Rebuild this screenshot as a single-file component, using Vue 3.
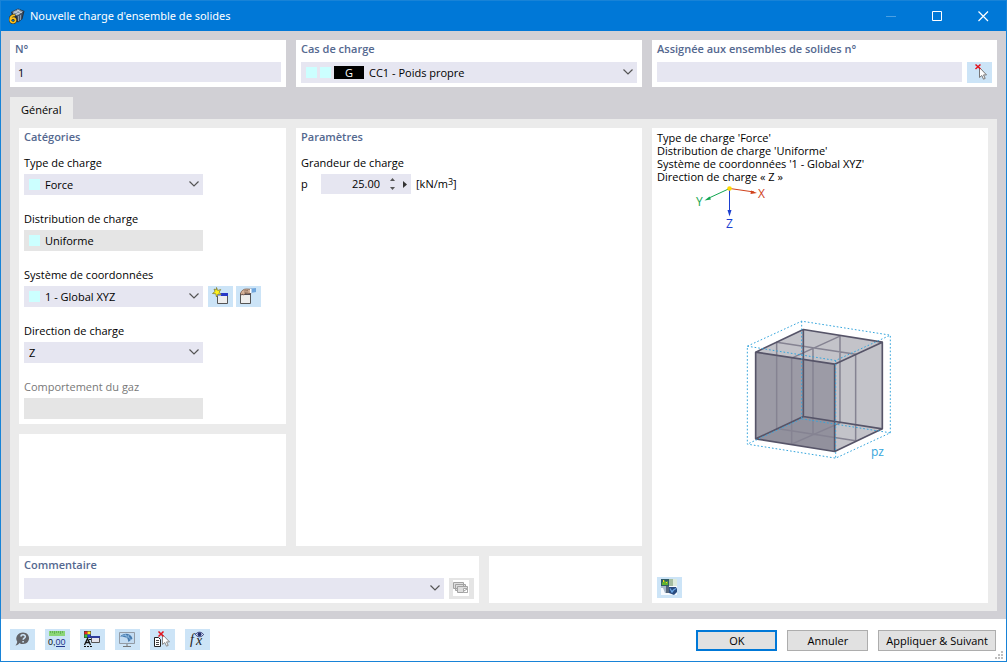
<script setup>
import { ref } from 'vue'

const number = ref('1')
const loadCase = ref('CC1 - Poids propre')
const assigned = ref('')
const loadType = ref('Force')
const distribution = ref('Uniforme')
const system = ref('1 - Global XYZ')
const direction = ref('Z')
const magnitude = ref('25.00')
const comment = ref('')

function step(delta) {
  magnitude.value = (Number(magnitude.value) + delta).toFixed(2)
}
</script>

<template>
  <div class="window">
    <header class="titlebar">
      <svg class="app-icon" viewBox="0 0 16 16" aria-hidden="true">
        <path d="M2 4 9 0.500 15.500 3 13.500 11 9 14.500 4 11z" fill="#24303f" />
        <path d="M3 4 9 1 14.500 3.500 8 8z" fill="#7c8ca0" />
        <path d="M4 5.500 10.500 2M6.500 7 13 4M5.500 3.500l5 3M8 2l5 3" stroke="#d3dae2" stroke-width=".8" />
        <path d="M8 8l6-4-1.500 7L9 14z" fill="#46566c" />
        <path d="M9.500 8v5M11.500 7v5" stroke="#9caabb" stroke-width=".8" />
        <path d="M6 7.500C3 7.200 1.200 9 1.200 11.500c0 4 5.300 4 5.300.8 0-2.500-3.600-3-5-.5" fill="none" stroke="#30302a" stroke-width="3" />
        <path d="M6 7.500C3 7.200 1.200 9 1.200 11.500c0 4 5.300 4 5.300.8 0-2.500-3.600-3-5-.5" fill="none" stroke="#fbc31e" stroke-width="1.700" />
      </svg>
      <h1>Nouvelle charge d'ensemble de solides</h1>
      <div class="window-buttons">
        <button type="button" aria-label="Réduire" disabled>
          <svg viewBox="0 0 11 11"><path d="M0 5.500h10" stroke="#4ba0e3" /></svg>
        </button>
        <button type="button" aria-label="Agrandir">
          <svg viewBox="0 0 11 11"><path d="M.5.5h9v9h-9z" fill="none" stroke="#fff" /></svg>
        </button>
        <button type="button" aria-label="Fermer">
          <svg viewBox="0 0 11 11"><path d="M.5.5l9.500 9.500M10 .5.500 10" stroke="#fff" stroke-width="1.200" /></svg>
        </button>
      </div>
    </header>

    <main class="body">
      <div class="top">
        <section class="panel">
          <h2><label for="number">N°</label></h2>
          <input id="number" v-model="number" class="box" type="text" />
        </section>
        <section class="panel">
          <h2><label for="case">Cas de charge</label></h2>
          <div class="combo">
            <i class="swatch"></i><i class="swatch near"></i><span class="badge">G</span>
            <select id="case" v-model="loadCase"><option>CC1 - Poids propre</option></select>
            <svg class="chevron" viewBox="0 0 10 6"><path d="M.5.5 5 5 9.500.5" /></svg>
          </div>
        </section>
        <section class="panel">
          <h2><label for="assigned">Assignée aux ensembles de solides n°</label></h2>
          <div class="line">
            <input id="assigned" v-model="assigned" class="box" type="text" />
            <button class="tool" type="button" aria-label="Sélectionner dans le graphique">
              <svg viewBox="0 0 25 21">
                <path d="M12.500 5.500v10l2.300-2 1.700 3.700 1.700-.8-1.700-3.500h3z" fill="#fff" stroke="#777" />
                <path d="M8.500 2.500l5 4.500M13.500 2.500l-5 4.500" stroke="#e3121d" stroke-width="1.500" />
              </svg>
            </button>
          </div>
        </section>
      </div>

      <nav class="tabs"><button type="button" class="tab">Général</button></nav>

      <div class="page">
        <div class="work">
          <div class="work-main">
            <div class="left">
              <section class="panel categories">
                <h2>Catégories</h2>
                <div class="field">
                  <label for="type">Type de charge</label>
                  <div class="combo">
                    <i class="swatch"></i>
                    <select id="type" v-model="loadType"><option>Force</option></select>
                    <svg class="chevron" viewBox="0 0 10 6"><path d="M.5.5 5 5 9.500.5" /></svg>
                  </div>
                </div>
                <div class="field">
                  <label for="dist">Distribution de charge</label>
                  <div class="combo off">
                    <i class="swatch"></i>
                    <select id="dist" v-model="distribution" disabled><option>Uniforme</option></select>
                  </div>
                </div>
                <div class="field">
                  <label for="system">Système de coordonnées</label>
                  <div class="line">
                    <div class="combo">
                      <i class="swatch"></i>
                      <select id="system" v-model="system"><option>1 - Global XYZ</option></select>
                      <svg class="chevron" viewBox="0 0 10 6"><path d="M.5.5 5 5 9.500.5" /></svg>
                    </div>
                    <div class="pair">
                      <button class="tool" type="button" aria-label="Nouveau système de coordonnées">
                        <svg viewBox="0 0 25 21">
                          <path d="M9.500 7.500h10v10h-10z" fill="#eee" stroke="#555" />
                          <path d="M9 7h11v3H9z" fill="#2638c8" /><path d="M9 7h4v3H9z" fill="#8aa0ee" />
                          <path d="M8.500 1.500l1.200 3 3-1-1.500 2.700 2 2.300-3.200-.5-1.500 3-.7-3.200-3.300-.3 2.500-2-1-2.500 2.200 1z" fill="#fff31c" stroke="#77722a" stroke-width=".7" />
                        </svg>
                      </button>
                      <button class="tool" type="button" aria-label="Modifier le système de coordonnées">
                        <svg viewBox="0 0 25 21">
                          <path d="M4.500 7.500h10v10h-10z" fill="#eee" stroke="#555" />
                          <path d="M4 7h11v2H4z" fill="#4c4c58" />
                          <path d="M4.500 7.500c1-3 3-4.500 6-4.500l5 .3v3.500l-3.500 1-3-.3-1.500 1.700-.8-1.200-1.200 1z" fill="#d7b39b" stroke="#785b49" stroke-width=".8" />
                          <path d="M8 5l4-.5M8.500 6.500l4-.5" stroke="#785b49" stroke-width=".7" />
                          <path d="M15 2.500l5-.5v4l-5 1z" fill="#6fa5dc" /><path d="M14 3h1.500v4H14z" fill="#fff" />
                        </svg>
                      </button>
                    </div>
                  </div>
                </div>
                <div class="field">
                  <label for="dir">Direction de charge</label>
                  <div class="combo">
                    <select id="dir" v-model="direction"><option>Z</option></select>
                    <svg class="chevron" viewBox="0 0 10 6"><path d="M.5.5 5 5 9.500.5" /></svg>
                  </div>
                </div>
                <div class="field muted">
                  <label for="gas">Comportement du gaz</label>
                  <div class="combo off"><select id="gas" disabled></select></div>
                </div>
              </section>
              <section class="panel grow"></section>
            </div>

            <section class="panel">
              <h2>Paramètres</h2>
              <div class="field wide">
                <span>Grandeur de charge</span>
                <div class="line">
                  <label class="symbol" for="magnitude">p</label>
                  <div class="spin">
                    <input id="magnitude" v-model="magnitude" type="text" />
                    <span class="steps">
                      <button type="button" aria-label="Augmenter" @click="step(1)"><svg viewBox="0 0 5 3"><path d="M0 3h5L2.500 0z" /></svg></button>
                      <button type="button" aria-label="Diminuer" @click="step(-1)"><svg viewBox="0 0 5 3"><path d="M0 0h5L2.500 3z" /></svg></button>
                    </span>
                    <button class="more" type="button" aria-label="Plus"><svg viewBox="0 0 4 7"><path d="M0 0v7l4-3.500z" /></svg></button>
                  </div>
                  <span class="unit">[kN/m<sup>3</sup>]</span>
                </div>
              </div>
            </section>
          </div>

          <div class="work-foot">
            <section class="panel">
              <h2><label for="comment">Commentaire</label></h2>
              <div class="line">
                <div class="combo">
                  <select id="comment" v-model="comment"></select>
                  <svg class="chevron" viewBox="0 0 10 6"><path d="M.5.5 5 5 9.500.5" /></svg>
                </div>
                <button class="tool dim" type="button" aria-label="Commentaires enregistrés" disabled>
                  <svg viewBox="0 0 25 21">
                    <path d="M4 2h16v16H4z" fill="#fff" />
                    <path d="M4.500 4.500h10v6h-10zM6.500 6.500h10v6h-10z" fill="#ddd" stroke="#a2a2a2" />
                    <path d="M8.500 8.500h10v6h-10z" fill="#ddd" stroke="#a2a2a2" />
                    <path d="M14.500 10.500h4v4h-4z" fill="#fff" stroke="#aaa" /><path d="M15 13l3-2" stroke="#999" />
                  </svg>
                </button>
              </div>
            </section>
            <section class="panel"></section>
          </div>
        </div>

        <section class="preview">
          <p>Type de charge 'Force'<br />Distribution de charge 'Uniforme'<br />Système de coordonnées '1 - Global XYZ'<br />Direction de charge « Z »</p>
          <svg class="scene" viewBox="652 183 336 394" role="img" aria-label="Aperçu de la charge sur un solide">
            <g fill="none" stroke-width="1">
              <path d="M730 188.500 754 192" stroke="#d0421b" /><path d="M729.500 188.500 709 198" stroke="#12a650" /><path d="M729.500 188.500V210" stroke="#1b3fd0" />
            </g>
            <path d="M757 193l-6.500 1 .5-3.500z" fill="#d0421b" />
            <path d="M704.500 200.500l5-4 1.500 3z" fill="#12a650" />
            <path d="M729.500 216.500l-2-6.500h4z" fill="#1b3fd0" />
            <circle cx="729.500" cy="188.500" r="2.300" fill="#ffd800" />
            <text x="758" y="198" fill="#d0421b">X</text>
            <text x="696" y="206" fill="#12a650">Y</text>
            <text x="726" y="228" fill="#1b3fd0">Z</text>
            <g transform="translate(734 309.500) scale(.3333)" fill="none" stroke-linejoin="round">
              <path d="M65 128 208 60 445 98V358L302 426 65 388z" fill="#c3c3c9" />
              <path d="M65 128 302 164V426L65 388z" fill="#9c9ba6" />
              <path d="M65 388 208 321 302 336V426z" fill="#92919d" />
              <g stroke="#858392" stroke-width="4.500">
                <path d="M128 98 365 134V394L128 357zM318 80 173 146V404L318 340zM237 116V375" />
              </g>
              <g stroke="#565468" stroke-width="5">
                <path d="M208 60V321L65 388M208 321 445 358" />
                <path d="M65 128 208 60 445 98V358L302 426 65 388zL302 164 445 98M302 164V426" />
              </g>
              <g stroke="#35a5dc" stroke-width="3" stroke-dasharray="5 6">
                <path d="M40 110 203 35 469 77V370L305 446 40 404zL305 153 469 77M305 153V446M203 35V328L40 404M203 328 469 370" />
              </g>
            </g>
            <text x="871" y="456" class="load">pz</text>
          </svg>
          <button class="tool" type="button" aria-label="Afficher l'image">
            <svg viewBox="0 0 25 21">
              <path d="M4 2h16v16H4z" fill="#f7fbff" />
              <path d="M4 2h8v7H4z" fill="#315d66" /><path d="M5 6l2-3 2 2 2-1v4H5z" fill="#62b32c" /><path d="M6 3h1v2H6zM9 5h1v1H9z" fill="#ffd21c" />
              <path d="M12 2h4v7h-4z" fill="#a5bda0" /><path d="M16 2h4v7h-4z" fill="#dceadb" />
              <path d="M4 9h8v2H4zM6 11h6v5H8z" fill="#a7b6c8" /><path d="M9 9h3v7H9z" fill="#56677c" />
              <path d="M12 10h7l1 2v3l-3 3-5-2z" fill="#284b80" />
              <path d="M13 11.500l2 3.500 1.500-2 2.500-1.500" fill="none" stroke="#6ba6e4" stroke-width="1.300" />
            </svg>
          </button>
        </section>
      </div>
    </main>

    <footer class="footer">
      <div class="tools">
        <button class="tool" type="button" aria-label="Aide">
          <svg viewBox="0 0 25 21">
            <path d="M13 3.500c8 0 8 11.500 0 11.500-1.500 0-2.500 0-3.500-1-1 1.500-2.500 2.500-4 2.500 1-1.200 1.800-2.500 1.700-4C4.500 8.500 8 3.500 13 3.500z" fill="#626469" />
            <path d="M10.800 7.500c.4-2.500 4.700-2.200 4.500.2-.1 1.500-2.100 1.400-2.100 3.100M13.100 12v1.500" fill="none" stroke="#cce4f7" stroke-width="1.600" />
          </svg>
        </button>
        <button class="tool" type="button" aria-label="Unités et décimales">
          <svg viewBox="0 0 25 21">
            <path d="M4 2h16v5H4z" fill="#8bd678" /><path d="M5.500 2v2M7.500 2v2M9.500 2v3M11.500 2v2M13.500 2v2M15.500 2v3M17.500 2v2" stroke="#55a445" stroke-width=".7" />
            <text x="3" y="16" class="digits">0,<tspan class="blue">00</tspan></text>
            <path d="M11 17.500h9" stroke="#23378c" />
          </svg>
        </button>
        <button class="tool" type="button" aria-label="Affichage">
          <svg viewBox="0 0 25 21">
            <path d="M4 2h7v7H4z" fill="#333" /><path d="M4.500 2.500h3v3h-3z" fill="#f12727" /><path d="M7.500 2.500h3v3h-3z" fill="#ffe621" /><path d="M4.500 5.500h3v3h-3z" fill="#35bd35" /><path d="M7.500 5.500h3v3h-3z" fill="#2540e8" />
            <path d="M4.500 16l3-6.500 3 6.500M5.500 13.500h4" fill="none" stroke="#111" stroke-width="1.300" /><path d="M4 17.500h8" stroke="#111" stroke-dasharray="2 1" /><path d="M9 10.500h3" stroke="#111" />
            <path d="M11.500 7.500h8v6h-8z" fill="#e4e4ed" stroke="#555" /><path d="M11 7h9v2h-9z" fill="#2c3c9d" />
          </svg>
        </button>
        <button class="tool" type="button" aria-label="Vue">
          <svg viewBox="0 0 25 21">
            <path d="M4.500 3.500h15v11h-15z" fill="#c3dcf2" stroke="#929ba5" /><path d="M12 15v3M8 17.500h8" stroke="#777" />
            <path d="M5 7.500C9 3 16 4 17.500 9.500l-4 3.500-1-3.500c-2-1.500-5-2-7.500-2z" fill="#457aae" /><path d="M7 7c4-1.500 7 0 8.500 4M10 5l2 4M14 5.500l-1 3.500" fill="none" stroke="#9cc5e8" stroke-width=".7" />
          </svg>
        </button>
        <button class="tool" type="button" aria-label="Désélectionner">
          <svg viewBox="0 0 25 21">
            <path d="M4.500 8.500h4l2 2v7h-6z" fill="#fff" stroke="#222" /><path d="M6 11.500h3M6 13.500h3M6 15.500h3" stroke="#444" />
            <path d="M12.500 5.500v10l2.300-2 1.700 3.700 1.700-.8-1.700-3.500h3z" fill="#fff" stroke="#888" /><path d="M8.500 2.500l5 5M13.500 2.500l-5 5" stroke="#e3121d" stroke-width="1.500" />
          </svg>
        </button>
        <button class="tool" type="button" aria-label="Formule">
          <svg viewBox="0 0 25 21">
            <text x="5" y="15" class="formula">f</text><text x="11" y="16" class="formula">x</text>
            <path d="M10.500 5.500c2-3 6-3 8 0-2 3-6 3-8 0z" fill="#dbe5ff" stroke="#25306b" /><circle cx="14.500" cy="5.300" r="1.900" fill="#25306b" />
          </svg>
        </button>
      </div>
      <div class="actions">
        <button class="action primary" type="button">OK</button>
        <button class="action" type="button">Annuler</button>
        <button class="action" type="button">Appliquer &amp; Suivant</button>
      </div>
      <svg class="grip" viewBox="0 0 8 8" aria-hidden="true"><path d="M6 0h2v2H6zM3 3h2v2H3zM6 3h2v2H6zM0 6h2v2H0zM3 6h2v2H3zM6 6h2v2H6z" fill="#bfbfbf" /></svg>
    </footer>
  </div>
</template>

<style>
body { margin: 0; }
</style>

<style scoped>
* { box-sizing: border-box; }
.window {
  display: flex; flex-direction: column; min-height: 100vh;
  border: 1px solid #1883d7; background: #d1d0d5; color: #000;
  font: 11px/16px "Open Sans", "Noto Sans", sans-serif;
}
h1, h2, p { margin: 0; font-size: inherit; }
button, input, select { margin: 0; border: 0; padding: 0; font: inherit; color: inherit; background: transparent; border-radius: 0; }
svg { display: block; }
.titlebar { display: flex; align-items: center; height: 30px; padding-left: 8px; background: #0078d7; color: #fff; }
.app-icon { width: 16px; height: 16px; margin-right: 5px; }
h1 { flex: 1; font: 400 11px/16px "Noto Sans", sans-serif; }
.window-buttons { display: flex; align-self: stretch; }
.window-buttons button { width: 46px; display: grid; place-items: center; }
.window-buttons svg { width: 11px; height: 11px; }
.body { flex: 1; display: flex; flex-direction: column; padding: 9px 9px 8px; }
.top { display: grid; grid-template-columns: 276fr 346fr 345fr; gap: 10px; }
.panel { min-width: 0; padding: 1px 5px 4px; background: #fff; }
h2 { margin-bottom: 5px; color: #54688f; font-weight: 600; }
.box { display: block; width: 100%; min-width: 0; height: 20px; padding: 0 3px; background: #e6e6f1; }
.line { display: flex; gap: 5px; }
.combo { position: relative; flex: 1; display: flex; align-items: center; height: 21px; padding-left: 5px; background: #e6e6f1; }
.combo select { flex: 1; min-width: 0; height: 21px; appearance: none; opacity: 1; }
.combo.off { background: #e5e5e5; }
.swatch { width: 11px; height: 11px; margin-right: 5px; background: #ccffff; }
.swatch:has(+ .swatch), .near { margin-right: 3px; }
.badge { width: 30px; height: 13px; margin-right: 5px; background: #000; color: #fff; line-height: 13px; text-align: center; }
.chevron { position: absolute; right: 4px; top: 7px; width: 10px; height: 6px; pointer-events: none; fill: none; stroke: #555; stroke-width: 1.200; }
.tool { flex: none; width: 25px; height: 21px; background: #cce4f7; }
.tool svg { width: 25px; height: 21px; }
.tool.dim { background: #e5e5e5; }
.tabs { display: flex; margin-top: 10px; }
.tab { height: 22px; padding: 4px 12px 0 11px; background: #ebebeb; }
.page { flex: 1; display: grid; grid-template-columns: 623fr 336fr; gap: 10px; padding: 9px 9px 8px; background: #ebebeb; }
.work { display: flex; flex-direction: column; gap: 10px; min-width: 0; }
.work-main { flex: 1; display: grid; grid-template-columns: 267fr 346fr; gap: 10px; }
.work-foot { display: grid; grid-template-columns: 460fr 153fr; gap: 10px; }
.left { display: flex; flex-direction: column; gap: 10px; min-width: 0; }
.grow { flex: 1; }
.categories { padding-bottom: 5px; }
.field { display: flex; flex-direction: column; gap: 3px; margin-top: 16px; }
h2 + .field { margin-top: 10px; }
.field > .combo, .field .line > .combo { flex: none; width: 179px; }
.pair { display: flex; gap: 3px; }
.muted { color: #787878; }
.symbol { width: 15px; line-height: 20px; }
.spin { display: flex; width: 90px; height: 20px; background: #e6e6f1; }
.spin input { flex: 1; min-width: 0; text-align: right; }
.steps { display: flex; flex-direction: column; justify-content: center; gap: 6px; margin: 0 8px 0 10px; fill: #555; }
.steps button, .steps svg { display: block; width: 5px; height: 3px; }
.more { width: 8px; fill: #333; }
.more svg { width: 4px; height: 7px; }
.unit { line-height: 20px; }
.unit sup { font-size: 9px; line-height: 0; vertical-align: 3px; }
.preview { display: flex; flex-direction: column; background: #fff; min-width: 0; padding-bottom: 5px; }
.preview p { padding: 3px 5px 0; line-height: 13px; }
.preview .tool { margin-left: 5px; }
.scene { flex: 1; width: 100%; min-height: 394px; font-size: 12px; }
.load { fill: #35a5dc; }
.footer { position: relative; display: flex; justify-content: space-between; align-items: flex-start; height: 42px; padding: 10px 10px 0 9px; background: #fff; }
.tools { display: flex; gap: 10px; }
.actions { display: flex; gap: 10px; padding-top: 1px; }
.action { min-width: 81px; height: 21px; padding: 0 7px; border: 1px solid #adadad; background: #e1e1e1; }
.primary { border: 2px solid #0078d7; }
.digits { font: 9px "Liberation Sans", sans-serif; fill: #111; }
.blue { fill: #23378c; }
.formula { font: italic 14px "Liberation Serif", serif; fill: #222; }
.grip { position: absolute; right: 3px; bottom: 2px; width: 8px; height: 8px; }
</style>
